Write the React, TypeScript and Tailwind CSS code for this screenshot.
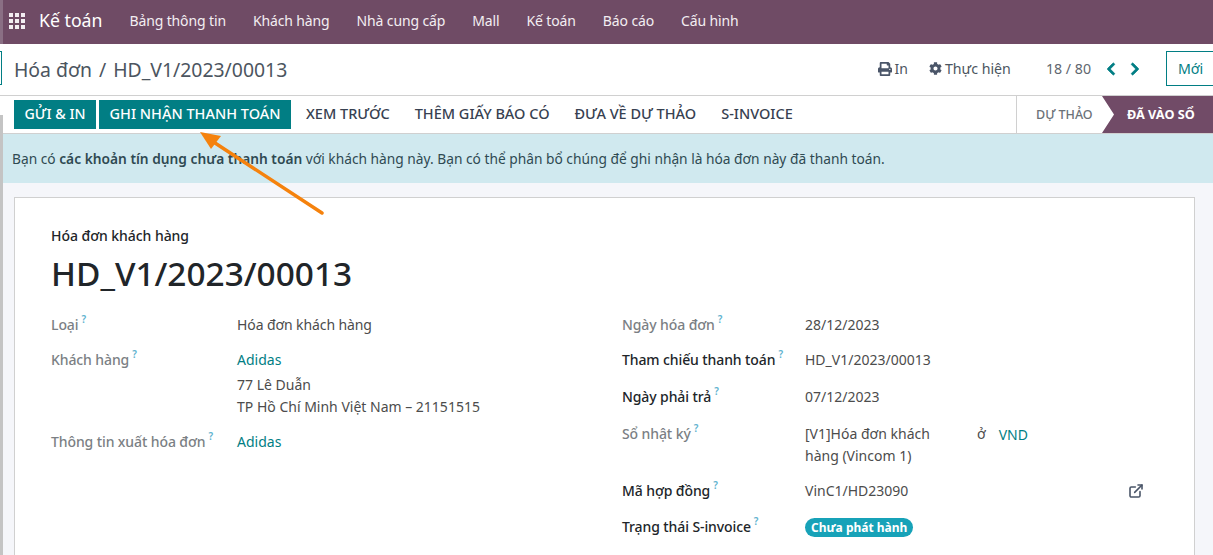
import { FaChevronLeft, FaChevronRight, FaCog, FaPrint } from 'react-icons/fa';
import { ExternalLink } from 'lucide-react';

const menuItems = ['Bảng thông tin', 'Khách hàng', 'Nhà cung cấp', 'Mall', 'Kế toán', 'Báo cáo', 'Cấu hình'];
const actions = ['XEM TRƯỚC', 'THÊM GIẤY BÁO CÓ', 'ĐƯA VỀ DỰ THẢO', 'S-INVOICE'];

function Help() {
  return <sup className="ml-[3px] top-[-7px] text-[10px] font-semibold text-[#5fb3cf]">?</sup>;
}

function Label({ text, strong, className }: { text: string; strong?: boolean; className?: string }) {
  return (
    <div className={`tracking-[-0.1px] ${strong ? 'font-medium text-[#212529]' : 'font-medium text-[#7b7f84]'} ${className ?? ''}`}>
      {text}
      <Help />
    </div>
  );
}

export default function App() {
  return (
    <div className="relative h-[555px] w-[1213px] overflow-hidden bg-white font-['Noto_Sans','Open_Sans',sans-serif] text-[14px] leading-[21px] text-[#4c4c4c]">
      {/* top menu */}
      <nav className="flex h-[44px] items-center bg-[#6f4b65] pb-[3px] pl-[9px] text-white">
        <svg width="16" height="16" viewBox="0 0 16 16" fill="#f3eef2" className="mr-[14px]">
          <rect x="0" y="0" width="4" height="4" />
          <rect x="6" y="0" width="4" height="4" />
          <rect x="12" y="0" width="4" height="4" />
          <rect x="0" y="6" width="4" height="4" />
          <rect x="6" y="6" width="4" height="4" />
          <rect x="12" y="6" width="4" height="4" />
          <rect x="0" y="12" width="4" height="4" />
          <rect x="6" y="12" width="4" height="4" />
          <rect x="12" y="12" width="4" height="4" />
        </svg>
        <span className="mr-[27px] text-[17.7px]">Kế toán</span>
        <div className="flex gap-[27px] text-[14px] tracking-[-0.13px] text-[#f3eef2]">
          {menuItems.map((item) => (
            <span key={item}>{item}</span>
          ))}
        </div>
      </nav>

      {/* breadcrumb + pager */}
      <div className="flex h-[52px] items-center border-b border-[#d0d0d0] pb-[2px] pl-[14px]">
        <div className="mt-[2px] flex gap-[7px] text-[19.4px] text-[#4c5560]">
          <span>Hóa đơn</span>
          <span>/</span>
          <span>HD_V1/2023/00013</span>
        </div>
        <div className="ml-auto flex shrink-0 items-center">
          <FaPrint className="mr-[3px] text-[14px] text-[#4a5568]" />
          <span className="mr-[21px] text-[#4c5560]">In</span>
          <FaCog className="mr-[3px] text-[13px] text-[#4a5568]" />
          <span className="mr-[35px] text-[14.2px] text-[#4c5560]">Thực hiện</span>
          <span className="mr-[13px] text-[14.2px] text-[#5f6770]">18 / 80</span>
          <FaChevronLeft className="mr-[10px] stroke-current stroke-[30] text-[14px] text-[#017e84]" />
          <FaChevronRight className="mr-[24px] stroke-current stroke-[30] text-[14px] text-[#017e84]" />
          <div className="-mr-[12px] flex h-[35px] w-[59px] items-center border border-[#017e84] pl-[11px] text-[14.2px] text-[#017e84]">Mới</div>
        </div>
      </div>

      {/* status bar */}
      <div className="flex h-[38px] items-center justify-between border-b border-[#d0d0d0] pl-[14px]">
        <div className="flex items-center pb-[1px] text-[14.5px] font-medium">
          <button className="mr-[3px] h-[29px] w-[82px] bg-[#017e84] pb-[2px] text-[14.2px] text-white">GỬI &amp; IN</button>
          <button className="mr-[15px] h-[29px] w-[192px] bg-[#017e84] pb-[2px] text-white">GHI NHẬN THANH TOÁN</button>
          <div className="-mt-[2px] flex gap-[25px] text-[#374151]">
            {actions.map((action) => (
              <span key={action}>{action}</span>
            ))}
          </div>
        </div>
        <div className="flex h-full items-center border-l border-[#d0d0d0]">
          <span className="w-[85px] pl-[19px] text-[12.5px] font-medium text-[#6b7178]">DỰ THẢO</span>
          <div className="flex h-full w-[111px] items-center bg-[#714b67] pl-[25px] text-[12.7px] font-bold text-white [clip-path:polygon(0_0,100%_0,100%_100%,0_100%,12px_50%)]">
            ĐÃ VÀO SỔ
          </div>
        </div>
      </div>

      {/* content */}
      <div className="h-full bg-[#f5f6fa] pl-[3px]">
        <div className="flex h-[49px] items-center bg-[#d0e9ef] pl-[9px] text-[13.75px] text-[#2f4a52]">
          <span>
            Bạn có <b className="font-semibold">các khoản tín dụng chưa thanh toán</b> với khách hàng này. Bạn có thể phân bổ chúng để ghi nhận là hóa đơn này đã thanh toán.
          </span>
        </div>

        <div className="ml-[11px] mt-[14px] h-[500px] w-[1181px] border border-[#d0d0d0] bg-white pl-[36px] pt-[27px]">
          <div className="font-medium tracking-[-0.05px] text-[#212529]">Hóa đơn khách hàng</div>
          <div className="mt-[4px] text-[33.4px] leading-[46px] font-medium text-[#212529]">HD_V1/2023/00013</div>

          <div className="mt-[18px] flex">
            <div className="grid w-[571px] shrink-0 grid-cols-[186px_1fr] content-start">
              <Label text="Loại" />
              <div className="mb-[14px] tracking-[-0.1px]">Hóa đơn khách hàng</div>
              <Label text="Khách hàng" />
              <div className="mb-[13px]">
                <div className="mb-[4px] text-[#017e84]">Adidas</div>
                <div className="leading-[22px]">77 Lê Duẫn</div>
                <div className="leading-[22px]">TP Hồ Chí Minh Việt Nam – 21151515</div>
              </div>
              <Label text="Thông tin xuất hóa đơn" />
              <div className="text-[#017e84]">Adidas</div>
            </div>

            <div className="grid w-[522px] shrink-0 grid-cols-[183px_1fr] content-start">
              <Label text="Ngày hóa đơn" />
              <div className="mb-[14px]">28/12/2023</div>
              <Label text="Tham chiếu thanh toán" strong />
              <div className="mb-[16px]">HD_V1/2023/00013</div>
              <Label text="Ngày phải trả" strong />
              <div className="mb-[16px]">07/12/2023</div>
              <Label text="Sổ nhật ký" />
              <div className="mb-[13px] flex">
                <div className="w-[172px] shrink-0 pr-[20px] leading-[22px]">[V1]Hóa đơn khách hàng (Vincom 1)</div>
                <span>ở</span>
                <span className="ml-[13px] mt-[1px] text-[#017e84]">VND</span>
              </div>
              <Label text="Mã hợp đồng" strong />
              <div className="mb-[15px] flex items-center justify-between">
                <span>VinC1/HD23090</span>
                <ExternalLink size={16} strokeWidth={2.4} className="text-[#4a5568]" />
              </div>
              <Label text="Trạng thái S-invoice" strong />
              <div>
                <span className="inline-block h-[19px] rounded-full bg-[#17a2b8] px-[6px] text-[12px] leading-[19px] font-bold text-white">Chưa phát hành</span>
              </div>
            </div>
          </div>
        </div>
      </div>

      {/* window edge: clipped neighbour button and scrollbar, lying over the page */}
      <div className="absolute left-0 top-0 h-[44px] w-[3px] bg-[#8a6f84]" />
      <div className="absolute left-0 top-[51px] h-[34px] w-[2px] border-r border-y border-[#017e84]" />
      <div className="absolute bottom-0 left-0 top-[115px] w-[3px] bg-[#c4c4c4]" />

      {/* annotation arrow */}
      <svg className="absolute left-0 top-0" width="1213" height="555" viewBox="0 0 1213 555" fill="none">
        <line x1="322" y1="213" x2="212" y2="141" stroke="#f5820d" strokeWidth="3.5" strokeLinecap="round" />
        <polygon points="200,132 221,136 211,149" fill="#f5820d" />
      </svg>
    </div>
  );
}
